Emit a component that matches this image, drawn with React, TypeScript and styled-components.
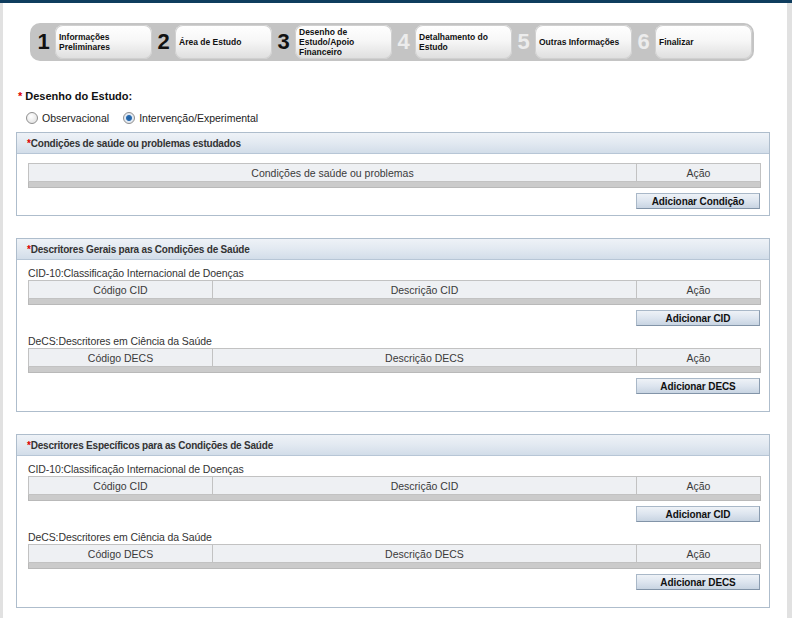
import React from 'react';
import styled, { createGlobalStyle } from 'styled-components';

const GlobalStyle = createGlobalStyle`
  html, body {
    margin: 0;
    padding: 0;
    overflow: hidden;
    background: #fff;
  }
  body {
    font-family: "Liberation Sans", Arial, sans-serif;
    font-size: 11px;
    color: #222;
  }
`;

const Page = styled.div`
  display: flex;
  height: 618px;
  border-top: 3px solid #0f3d5e;
  box-sizing: border-box;
`;

const SideStrip = styled.div<{ w: number }>`
  width: ${props => props.w}px;
  flex: none;
  background: #e1e1e1;
`;

const Main = styled.div`
  flex: 1;
  padding: 20px 0 0 13px;
  overflow: hidden;
`;

const StepBar = styled.div`
  display: grid;
  grid-template-columns: repeat(6, 1fr);
  width: 724px;
  height: 38px;
  margin-left: 14px;
  padding: 0 2px;
  box-sizing: border-box;
  background: #c4c4c4;
  border-radius: 10px;
`;

const Step = styled.div`
  display: flex;
  align-items: stretch;
`;

const StepNumber = styled.div<{ done?: boolean }>`
  width: 23px;
  flex: none;
  display: flex;
  align-items: center;
  justify-content: center;
  font: bold 22px "Liberation Sans", Arial, sans-serif;
  color: ${props => (props.done ? '#111' : '#ececec')};
`;

const StepLabel = styled.div`
  flex: 1;
  margin: 2px 0;
  padding: 0 4px;
  display: flex;
  align-items: center;
  border-radius: 8px;
  background: linear-gradient(#ffffff 0%, #f7f7f7 45%, #dedede 100%);
  box-shadow: inset 0 0 0 1px #d0d0d0;
  font: bold 8.5px/10px "Liberation Sans", Arial, sans-serif;
  color: #111;
`;

const StudyTitle = styled.div`
  margin: 29px 0 0 2px;
  font: bold 11px "Liberation Sans", Arial, sans-serif;
  color: #111;
`;

const Required = styled.span<{ gap?: number }>`
  color: #d00;
  margin-right: ${props => props.gap || 0}px;
`;

const RadioRow = styled.div`
  display: flex;
  align-items: center;
  margin: 10px 0 0 10px;
  font: 10.5px "Liberation Sans", Arial, sans-serif;
  color: #222;
`;

const RadioOption = styled.label`
  display: flex;
  align-items: center;
  gap: 4px;
  margin-right: 14px;
`;

const RadioDot = styled.span<{ checked?: boolean }>`
  width: 10px;
  height: 10px;
  border-radius: 50%;
  border: 1px solid #8f8f8f;
  background: ${props =>
    props.checked
      ? 'radial-gradient(circle, #1f5fa0 0, #2a6cb0 2.5px, #dfe9f5 3.5px, #eaeaea 6px)'
      : 'radial-gradient(circle at 40% 35%, #fff 0, #e6e6e6 70%)'};
`;

const Section = styled.div<{ top: number }>`
  width: 754px;
  margin-top: ${props => props.top}px;
  border: 1px solid #aebdcc;
  box-sizing: border-box;
  background: #fff;
`;

const SectionHeader = styled.div`
  height: 20px;
  padding-left: 10px;
  display: flex;
  align-items: center;
  border-bottom: 1px solid #b7c6d6;
  background: linear-gradient(#eef2f7 0%, #e2e9f1 50%, #d2dde9 100%);
  font: bold 10px "Liberation Sans", Arial, sans-serif;
  letter-spacing: -0.2px;
  color: #333;
`;

const SectionBody = styled.div<{ bottom: number }>`
  padding: 0 8px ${props => props.bottom}px 11px;
`;

const GroupLabel = styled.div<{ top: number }>`
  margin-top: ${props => props.top}px;
  height: 14px;
  font: 10.5px/14px "Liberation Sans", Arial, sans-serif;
  letter-spacing: -0.1px;
  color: #333;
`;

const Grid = styled.table<{ top?: number }>`
  width: 733px;
  margin-top: ${props => props.top || 0}px;
  border-collapse: collapse;
  table-layout: fixed;
`;

const HeadCell = styled.th<{ w?: number }>`
  width: ${props => (props.w ? `${props.w}px` : 'auto')};
  height: 17px;
  padding: 0;
  border: 1px solid #c2c2c2;
  background: #eef0f3;
  font: 10.5px "Liberation Sans", Arial, sans-serif;
  color: #3a3a3a;
  text-align: center;
`;

const FootCell = styled.td`
  height: 5px;
  padding: 0;
  background: #cbcbcb;
  border: 1px solid #b9b9b9;
  border-top: none;
`;

const ButtonRow = styled.div`
  display: flex;
  justify-content: flex-end;
  margin-top: 5px;
  padding-right: 1px;
`;

const AddButton = styled.button`
  width: 124px;
  height: 16px;
  padding: 0;
  border: 1px solid #a9b8c8;
  border-bottom-color: #8294a8;
  border-right-color: #8a9cb0;
  background: linear-gradient(#eef2f7 0%, #dde5ef 50%, #c8d4e2 100%);
  font: bold 10px "Liberation Sans", Arial, sans-serif;
  letter-spacing: -0.1px;
  color: #111;
  cursor: pointer;
`;

const steps = [
  { n: 1, label: 'Informações Preliminares', done: true },
  { n: 2, label: 'Área de Estudo', done: true },
  { n: 3, label: 'Desenho de Estudo/Apoio Financeiro', done: true },
  { n: 4, label: 'Detalhamento do Estudo', done: false },
  { n: 5, label: 'Outras Informações', done: false },
  { n: 6, label: 'Finalizar', done: false },
];

interface IDescriptorTableProps {
  code: string;
}

const DescriptorTable = ({ code }: IDescriptorTableProps): JSX.Element => (
  <Grid>
    <thead>
      <tr>
        <HeadCell w={183}>Código {code}</HeadCell>
        <HeadCell>Descrição {code}</HeadCell>
        <HeadCell w={123}>Ação</HeadCell>
      </tr>
    </thead>
    <tbody>
      <tr>
        <FootCell colSpan={3} />
      </tr>
    </tbody>
  </Grid>
);

interface IDescriptorSectionProps {
  title: string;
  top: number;
}

const DescriptorSection = ({ title, top }: IDescriptorSectionProps): JSX.Element => (
  <Section top={top}>
    <SectionHeader>
      <Required>*</Required>
      {title}
    </SectionHeader>
    <SectionBody bottom={17}>
      <GroupLabel top={6}>CID-10:Classificação Internacional de Doenças</GroupLabel>
      <DescriptorTable code="CID" />
      <ButtonRow>
        <AddButton>Adicionar CID</AddButton>
      </ButtonRow>
      <GroupLabel top={8}>DeCS:Descritores em Ciência da Saúde</GroupLabel>
      <DescriptorTable code="DECS" />
      <ButtonRow>
        <AddButton>Adicionar DECS</AddButton>
      </ButtonRow>
    </SectionBody>
  </Section>
);

const App = (): JSX.Element => {
  return (
    <>
      <GlobalStyle />
      <Page>
        <SideStrip w={3} />
        <Main>
          <StepBar>
            {steps.map(step => (
              <Step key={step.n}>
                <StepNumber done={step.done}>{step.n}</StepNumber>
                <StepLabel>{step.label}</StepLabel>
              </Step>
            ))}
          </StepBar>

          <StudyTitle>
            <Required gap={3}>*</Required>
            Desenho do Estudo:
          </StudyTitle>
          <RadioRow>
            <RadioOption>
              <RadioDot />
              Observacional
            </RadioOption>
            <RadioOption>
              <RadioDot checked />
              Intervenção/Experimental
            </RadioOption>
          </RadioRow>

          <Section top={8}>
            <SectionHeader>
              <Required>*</Required>
              Condições de saúde ou problemas estudados
            </SectionHeader>
            <SectionBody bottom={6}>
              <Grid top={9}>
                <thead>
                  <tr>
                    <HeadCell>Condições de saúde ou problemas</HeadCell>
                    <HeadCell w={123}>Ação</HeadCell>
                  </tr>
                </thead>
                <tbody>
                  <tr>
                    <FootCell colSpan={2} />
                  </tr>
                </tbody>
              </Grid>
              <ButtonRow>
                <AddButton>Adicionar Condição</AddButton>
              </ButtonRow>
            </SectionBody>
          </Section>

          <DescriptorSection top={22} title="Descritores Gerais para as Condições de Saúde" />
          <DescriptorSection top={22} title="Descritores Específicos para as Condições de Saúde" />
        </Main>
        <SideStrip w={5} />
      </Page>
    </>
  );
};

export default App;
